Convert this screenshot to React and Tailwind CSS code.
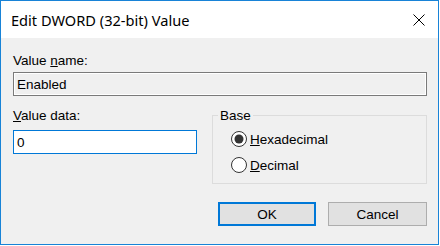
import React from "react";

function Radio({ checked }) {
  return (
    <svg width="16" height="16" viewBox="0 0 16 16" className="shrink-0">
      <circle cx="8" cy="8" r="7.5" fill="#ffffff" stroke="#333333" strokeWidth="1" />
      {checked && <circle cx="8" cy="8" r="4.5" fill="#333333" />}
    </svg>
  );
}

export default function App() {
  return (
    <div className="w-[440px] h-[246px] bg-white" style={{ fontFamily: '"Liberation Sans", Arial, sans-serif' }}>
      <div className="w-[439px] h-[245px] border border-[#1883d7] flex flex-col text-black">
        <div className="h-[37px] bg-white flex items-center justify-between pl-[10px] pr-[13px]">
          <span className="text-[14.6px] leading-[20px] pt-[1px]" style={{ fontFamily: '"Noto Sans", "Open Sans", sans-serif' }}>
            Edit DWORD (32-bit) Value
          </span>
          <svg width="12" height="12" viewBox="0 0 12 12">
            <path d="M0.5 0.5 L11.5 11.5 M11.5 0.5 L0.5 11.5" stroke="#000000" strokeWidth="1" />
          </svg>
        </div>
        <div className="flex-1 bg-[#f0f0f0] pl-[12px] pr-[11px] pt-[15px] text-[13.5px] leading-[15px] flex flex-col">
          <div>
            Value <span className="underline">n</span>ame:
          </div>
          <div className="mt-[4px] h-[24px] border border-[#7a7a7a] shadow-[inset_0_0_0_1px_#ffffff] flex items-center pl-[3px]">
            Enabled
          </div>
          <div className="mt-[12px] flex">
            <div className="flex flex-col w-[184px]">
              <div>
                <span className="underline">V</span>alue data:
              </div>
              <div className="mt-[7px] h-[24px] border border-[#0078d7] bg-white flex items-center pl-[3px]">
                0
              </div>
            </div>
            <fieldset className="ml-[15px] flex-1 h-[76px] border border-[#dcdcdc] m-0 p-0">
              <legend className="ml-[5px] px-[2px] leading-[15px]">Base</legend>
              <div className="flex flex-col pl-[18px] pt-[3px]">
                <div className="h-[26px] flex items-center gap-[3px]">
                  <Radio checked />
                  <span>
                    <span className="underline">H</span>exadecimal
                  </span>
                </div>
                <div className="h-[26px] flex items-center gap-[3px]">
                  <Radio />
                  <span>
                    <span className="underline">D</span>ecimal
                  </span>
                </div>
              </div>
            </fieldset>
          </div>
          <div className="mt-[18px] flex justify-end gap-[12px]">
            <div className="w-[98px] h-[24px] border-2 border-[#0078d7] bg-[#e1e1e1] flex items-center justify-center">
              OK
            </div>
            <div className="w-[99px] h-[24px] border border-[#adadad] bg-[#e1e1e1] flex items-center justify-center">
              Cancel
            </div>
          </div>
        </div>
      </div>
    </div>
  );
}
